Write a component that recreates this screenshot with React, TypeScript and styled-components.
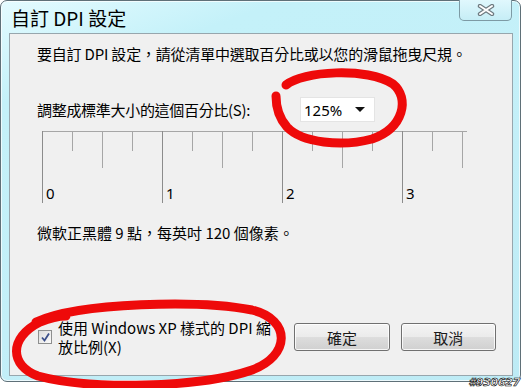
import React from 'react';
import styled, { createGlobalStyle } from 'styled-components';

const GlobalStyle = createGlobalStyle`
  html, body {
    margin: 0;
    padding: 0;
    background: #ffffff;
  }
  body {
    font-family: "Noto Sans CJK TC", "Noto Sans", sans-serif;
    color: #000000;
  }
  * {
    box-sizing: border-box;
  }
`;

const MAJOR = 120;
const STEP = 30;

const Ruler = () => {
  const ticks = Array.from({ length: 15 }, (_, i) => i);
  return (
    <RulerSvg width={430} height={82} viewBox="0 0 430 82">
      <line x1={0} y1={0.5} x2={425} y2={0.5} stroke="#a6a6a6" strokeWidth={1} />
      {ticks.map((i) => {
        const len = i % 4 === 0 ? 72 : i % 2 === 0 ? 37 : 20;
        const x = i * STEP + 0.5;
        return (
          <line
            key={i}
            x1={x}
            y1={0}
            x2={x}
            y2={len}
            stroke={i % 4 === 0 ? '#8c8c8c' : '#a6a6a6'}
            strokeWidth={1}
          />
        );
      })}
      {[0, 1, 2, 3].map((n) => (
        <text
          key={n}
          x={n * MAJOR + 4}
          y={68}
          fontSize={15}
          fill="#000000"
          fontFamily='"Noto Sans", sans-serif'
        >
          {n}
        </text>
      ))}
    </RulerSvg>
  );
};

const App = () => {
  return (
    <>
      <GlobalStyle />
      <Page>
        <Frame>
          <TitleBar>
            <Title>自訂 DPI 設定</Title>
            <CloseButton>
              <svg width="18" height="12" viewBox="0 0 18 12">
                <path d="M3 2 L15 10 M15 2 L3 10" stroke="#6e7a80" strokeWidth="4.4" strokeLinecap="round" />
                <path d="M3 2 L15 10 M15 2 L3 10" stroke="#ffffff" strokeWidth="2" strokeLinecap="round" />
              </svg>
            </CloseButton>
          </TitleBar>
          <Pane>
            <Intro>要自訂 DPI 設定，請從清單中選取百分比或以您的滑鼠拖曳尺規。</Intro>
            <ScaleRow>
              <Label>調整成標準大小的這個百分比(S):</Label>
              <Select>
                <span>125%</span>
                <Caret />
              </Select>
            </ScaleRow>
            <Ruler />
            <Info>微軟正黑體 9 點，每英吋 120 個像素。</Info>
            <BottomRow>
              <CheckArea>
                <CheckBox>
                  <svg width="11" height="11" viewBox="0 0 11 11">
                    <path d="M2 5.5 L4.5 8.5 L9 1.5" fill="none" stroke="#3b4f8a" strokeWidth="1.8" />
                  </svg>
                </CheckBox>
                <CheckLabel>
                  使用 Windows XP 樣式的 DPI 縮
                  <br />
                  放比例(X)
                </CheckLabel>
              </CheckArea>
              <Button>確定</Button>
              <Button>取消</Button>
            </BottomRow>
          </Pane>
        </Frame>
        <Marks width={522} height={388} viewBox="0 0 522 388">
          <path
            d="M286 85 C302 71 368 67 393 84 C410 98 404 128 372 139 C342 147 302 143 287 127 C279 118 276 106 276 96"
            fill="none"
            stroke="#ee0a0a"
            strokeWidth={9}
            strokeLinecap="round"
          />
          <path
            d="M36 322 C80 302 200 300 252 310 C292 320 290 356 252 370 C200 388 90 390 38 376 C10 366 8 338 40 322 C50 318 60 316 66 316"
            fill="none"
            stroke="#ee0a0a"
            strokeWidth={9}
            strokeLinecap="round"
          />
        </Marks>
        <Watermark>#930627</Watermark>
      </Page>
    </>
  );
};

export default App;

const Page = styled.div`
  position: relative;
  width: 522px;
  height: 388px;
  overflow: hidden;
  background: #ffffff;
`;

const Frame = styled.div`
  display: flex;
  flex-direction: column;
  width: 521px;
  height: 382px;
  padding: 0 7px 5px 8px;
  border: 1px solid #5f7078;
  border-radius: 7px;
  background: linear-gradient(160deg, #e4fbff 0%, #c4f1f9 18%, #c3eff8 60%, #bdebf5 100%);
  box-shadow: inset 0 0 0 1px rgba(255, 255, 255, 0.7);
`;

const TitleBar = styled.div`
  display: flex;
  justify-content: space-between;
  align-items: flex-start;
  height: 32px;
  flex-shrink: 0;
`;

const Title = styled.div`
  padding: 5px 0 0 2px;
  font-size: 19px;
  line-height: 24px;
  color: #000000;
`;

const CloseButton = styled.div`
  display: flex;
  align-items: center;
  justify-content: center;
  width: 53px;
  height: 21px;
  margin: -1px 1px 0 0;
  border: 1px solid #7d9aa4;
  border-top: none;
  border-radius: 0 0 5px 5px;
  background: linear-gradient(#e0f8fd, #c6eef6);
`;

const Pane = styled.div`
  display: flex;
  flex-direction: column;
  flex: 1;
  padding: 9px 16px 19px 27px;
  border: 1px solid #97a6ad;
  background: #f0f0f0;
`;

const Intro = styled.div`
  font-size: 15px;
  line-height: 21px;
  letter-spacing: -0.2px;
`;

const ScaleRow = styled.div`
  display: flex;
  align-items: center;
  margin-top: 33px;
`;

const Label = styled.div`
  width: 263px;
  font-size: 15px;
  line-height: 20px;
  letter-spacing: -0.3px;
`;

const Select = styled.div`
  display: flex;
  align-items: center;
  justify-content: space-between;
  width: 75px;
  height: 25px;
  padding: 0 9px 0 3px;
  background: #ffffff;
  border: 1px solid #e4e4e4;
  font-family: "Noto Sans", sans-serif;
  font-size: 15px;
  color: #000000;
`;

const Caret = styled.span`
  width: 0;
  height: 0;
  border-left: 5px solid transparent;
  border-right: 5px solid transparent;
  border-top: 5px solid #111111;
`;

const RulerSvg = styled.svg`
  display: block;
  margin: 9px 0 0 5px;
`;

const Info = styled.div`
  margin-top: 10px;
  font-size: 15px;
  line-height: 20px;
`;

const BottomRow = styled.div`
  display: flex;
  align-items: center;
  gap: 11px;
  margin-top: auto;
`;

const CheckArea = styled.div`
  display: flex;
  align-items: center;
  gap: 6px;
  width: 250px;
  margin-left: 1px;
`;

const CheckBox = styled.div`
  display: flex;
  align-items: center;
  justify-content: center;
  width: 14px;
  height: 14px;
  flex-shrink: 0;
  border: 1px solid #8e8f8f;
  background: linear-gradient(135deg, #dcdcdc, #fbfbfb);
`;

const CheckLabel = styled.div`
  font-size: 15px;
  line-height: 19px;
  white-space: nowrap;
`;

const Button = styled.div`
  display: flex;
  align-items: center;
  justify-content: center;
  width: 97px;
  height: 28px;
  border: 1px solid #707070;
  border-radius: 3px;
  background: linear-gradient(#f4f4f4 0%, #ebebeb 50%, #dddddd 51%, #d0d0d0 100%);
  box-shadow: inset 0 0 0 1px rgba(255, 255, 255, 0.8);
  font-size: 15px;
  color: #1a1a1a;
`;

const Marks = styled.svg`
  position: absolute;
  left: 0;
  top: 0;
  pointer-events: none;
`;

const Watermark = styled.div`
  position: absolute;
  right: 2px;
  bottom: 0;
  font-family: "DejaVu Sans", sans-serif;
  font-weight: bold;
  font-style: italic;
  font-size: 11px;
  line-height: 11px;
  color: #ffffff;
  -webkit-text-stroke: 0.6px #000000;
  letter-spacing: -0.3px;
`;
